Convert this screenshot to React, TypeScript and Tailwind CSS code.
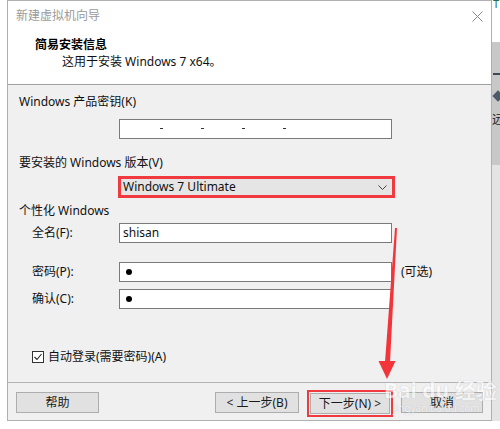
import React from 'react';

// Windows-style "new virtual machine" wizard, easy-install page
const Field: React.FC<{ children?: React.ReactNode; className?: string }> = ({ children, className = '' }) => (
  <div className={`h-[20px] w-[273px] bg-white border border-[#7a7a7a] flex items-center ${className}`}>{children}</div>
);

const Btn: React.FC<{ label: string; className?: string }> = ({ label, className = '' }) => (
  <div className={`h-[21px] bg-[#e1e1e1] border border-[#adadad] flex items-center justify-center text-[#1a1a1a] ${className}`}>{label}</div>
);

const Dot = () => <span className="ml-[6px] w-[6px] h-[6px] rounded-full bg-black" />;

export default function App() {
  return (
    <div className="relative w-[500px] h-[429px] bg-white flex overflow-hidden font-['Noto_Sans','Noto_Sans_CJK_SC',sans-serif] text-[12px] leading-[16px] text-[#111]">
      <div className="w-[7px] shrink-0" />

      {/* dialog */}
      <div className="w-[485px] h-[421px] shrink-0 border border-[#b0b0b0] flex flex-col bg-[#f0f0f0]">
        <div className="h-[84px] shrink-0 bg-white border-b border-[#a0a0a0] flex flex-col">
          <div className="h-[29px] flex items-center justify-between pl-[8px] pr-[8px]">
            <span className="text-[#9a9a9a]">新建虚拟机向导</span>
            <svg width="11" height="11" viewBox="0 0 11 11" className="mt-[1px]">
              <path d="M0.5 0.5L10.5 10.5M10.5 0.5L0.5 10.5" stroke="#8a8a8a" strokeWidth="1" fill="none" />
            </svg>
          </div>
          <div className="mt-[7px] pl-[27px] font-bold text-black">简易安装信息</div>
          <div className="mt-[1px] pl-[54px]">这用于安装 Windows 7 x64。</div>
        </div>

        <div className="flex-1 flex flex-col">
          <div className="mt-[9px] pl-[11px]">Windows 产品密钥(K)</div>
          <Field className="mt-[9px] ml-[111px] relative">
            {[160, 201, 242, 283].map((x) => (
              <span key={x} className="absolute top-[8px] h-[1px] w-[3px] bg-[#333]" style={{ left: x - 120 }} />
            ))}
          </Field>

          <div className="mt-[16px] pl-[11px]">要安装的 Windows 版本(V)</div>
          <div className="mt-[5px] ml-[110px] w-[277px] h-[22px] border-[3px] border-[#f03a3f] bg-[#e5e5e5] flex items-center justify-between pl-[2px] pr-[5px]">
            <span>Windows 7 Ultimate</span>
            <svg width="9" height="5" viewBox="0 0 9 5">
              <path d="M0.5 0.5L4.5 4.5L8.5 0.5" stroke="#444" strokeWidth="1" fill="none" />
            </svg>
          </div>

          <div className="mt-[5px] pl-[11px]">个性化 Windows</div>
          <div className="mt-[4px] flex items-center">
            <span className="w-[111px] pl-[24px]">全名(F):</span>
            <Field>
              <span className="pl-[3px]">shisan</span>
            </Field>
          </div>
          <div className="mt-[19px] flex items-center">
            <span className="w-[111px] pl-[24px]">密码(P):</span>
            <Field>
              <Dot />
            </Field>
            <span className="ml-[9px]">(可选)</span>
          </div>
          <div className="mt-[7px] flex items-center">
            <span className="w-[111px] pl-[24px]">确认(C):</span>
            <Field>
              <Dot />
            </Field>
          </div>

          <div className="mt-[40px] flex items-center pl-[24px] h-[16px]">
            <svg width="12" height="12" viewBox="0 0 12 12">
              <rect x="0.5" y="0.5" width="11" height="11" fill="white" stroke="#333" />
              <path d="M2.5 6L5 8.5L9.5 3" stroke="#222" strokeWidth="1.1" fill="none" />
            </svg>
            <span className="ml-[4px]">自动登录(需要密码)(A)</span>
          </div>

          <div className="mt-[17px] h-[1px] bg-[#b4b4b4]" />

          <div className="mt-[7px] flex items-start">
            <Btn label="帮助" className="mt-[2px] ml-[8px] w-[83px]" />
            <Btn label="< 上一步(B)" className="mt-[2px] ml-[116px] w-[84px]" />
            <div className="ml-[8px] w-[86px] h-[27px] border-[2px] border-[#f03a3f] p-[1px]">
              <Btn label="下一步(N) >" className="w-full" />
            </div>
            <Btn label="取消" className="mt-[2px] ml-[8px] w-[82px]" />
          </div>
        </div>
      </div>

      {/* neighbouring window edge */}
      <div className="w-[8px] shrink-0 flex flex-col">
        <div className="h-[42px] bg-white relative">
          <span className="absolute left-[1px] top-[-4px] text-[#217346] text-[11px]">T</span>
        </div>
        <div className="h-[123px] bg-[#c8c8c8] flex flex-col items-start">
          <div className="mt-[31px] ml-[1px] h-[2px] w-[7px] bg-[#3c4a58]" />
          <div className="mt-[17px] ml-[2px] w-[8px] h-[8px] rotate-45 bg-[#4b5a69]" />
          <span className="mt-[13px] text-[12px] leading-[14px] text-[#222]">远</span>
        </div>
        <div className="h-[256px] bg-[#e4e4e4]" />
      </div>

      {/* red annotation arrow */}
      <svg className="absolute left-0 top-0 pointer-events-none" width="500" height="429">
        <polygon points="395,228 397,228 390,362 385,362" fill="#f2353a" />
        <polygon points="378.5,361 395.5,361 387,379" fill="#f2353a" />
      </svg>

      {/* watermark */}
      <div className="absolute left-[384px] top-[378px] flex flex-col whitespace-nowrap opacity-60 text-white [text-shadow:0_0_1px_#9a9a9a] pointer-events-none">
        <span className="text-[21px] leading-[24px] font-bold">Bai du 经验</span>
        <span className="text-[10px] leading-[12px] ml-[9px]">jingyan.baidu.com</span>
      </div>
    </div>
  );
}
